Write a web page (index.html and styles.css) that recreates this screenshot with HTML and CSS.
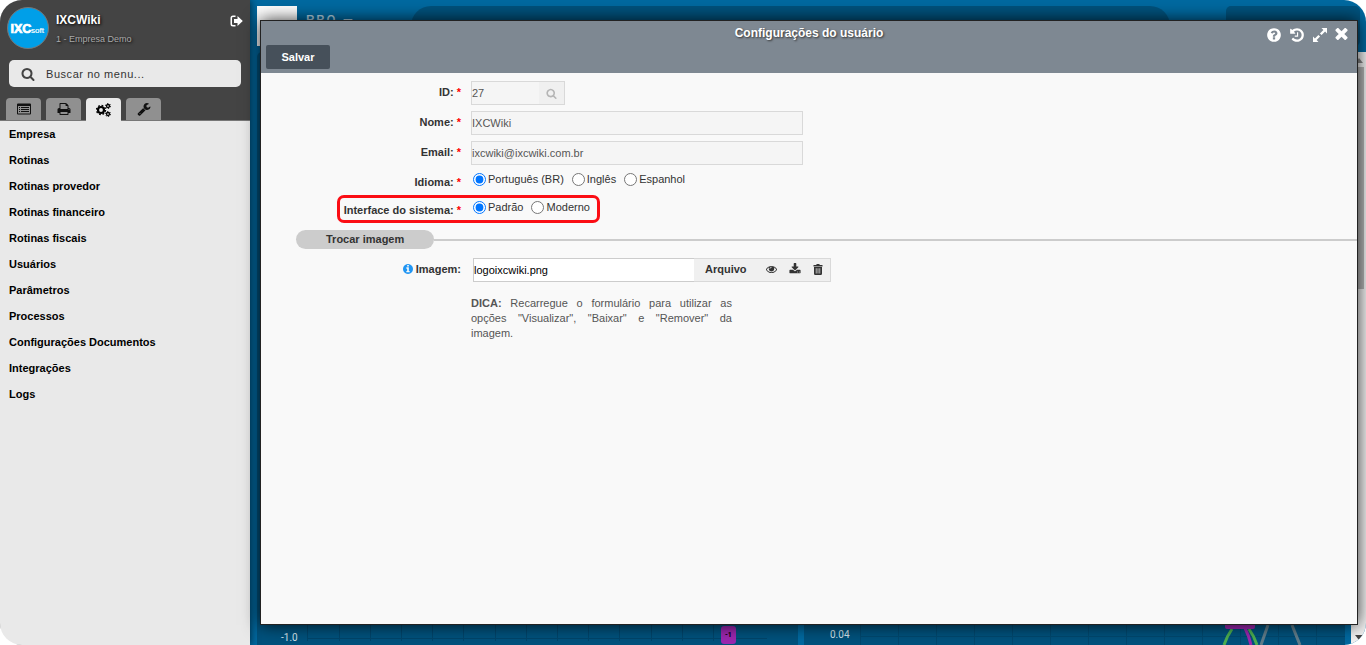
FILE: index.html
```html
<!DOCTYPE html>
<html lang="pt-BR">
<head>
<meta charset="utf-8">
<title>Configurações do usuário</title>
<link rel="stylesheet" href="styles.css">
</head>
<body>
<div class="app">
  <aside class="sidebar">
    <header class="side-head">
      <div class="profile">
        <svg class="logo" viewBox="0 0 42 42" role="img" aria-label="IXCsoft">
          <circle cx="21" cy="21" r="20.5" fill="#009fe8" stroke="#777" />
          <text x="3.5" y="25.5" font-size="12.5" font-weight="900" stroke="#fff" stroke-width=".7">IXC</text>
          <text x="24" y="25.5" font-size="8" stroke="#fff" stroke-width=".2">soft</text>
        </svg>
        <div class="who">
          <strong class="user">IXCWiki</strong>
          <span class="company">1 - Empresa Demo</span>
        </div>
        <button class="icon-btn logout" aria-label="Sair">
          <svg viewBox="0 0 13 12" width="13" height="12" fill="currentColor"><path d="M5.500 .5H3Q.5 .5 .5 3v6q0 2.500 2.500 2.500h2.500V10H3q-1 0-1-1V3q0-1 1-1h2.500zM7.500 1 12.800 6 7.500 11V8H4V4h3.500z"/></svg>
        </button>
      </div>
      <label class="search">
        <svg viewBox="0 0 1792 1792" width="14" height="14" fill="#444"><path d="M1216 832q0-185-131.500-316.500t-316.500-131.500-316.500 131.500-131.500 316.500 131.500 316.500 316.500 131.500 316.500-131.500 131.500-316.500zm512 832q0 52-38 90t-90 38q-54 0-90-38l-343-342q-179 124-399 124-143 0-273.500-55.500t-225-150-150-225-55.500-273.500 55.500-273.500 150-225 225-150 273.500-55.500 273.500 55.500 225 150 150 225 55.500 273.500q0 220-124 399l343 343q37 37 37 90z"/></svg>
        <input type="text" placeholder="Buscar no menu..." aria-label="Buscar no menu">
      </label>
      <nav class="tabs" aria-label="Módulos">
        <button class="tab" aria-label="Cadastros"><svg viewBox="0 0 14 12" width="14" height="12" fill="#111"><path fill-rule="evenodd" d="M1 .5h12q1 0 1 1v9q0 1-1 1H1q-1 0-1-1v-9q0-1 1-1zM1 3v7.500h12V3z"/><path d="M2 4h1v1H2zM4 4h8v1H4zM2 6h1v1H2zM4 6h8v1H4zM2 8h1v1H2zM4 8h8v1H4z"/></svg></button>
        <button class="tab" aria-label="Relatórios"><svg viewBox="0 0 1792 1792" width="14" height="14" fill="#111"><path d="M448 1536h896v-256h-896v256zm0-640h896v-384h-160q-40 0-68-28t-28-68v-160h-640v640zm1152 64q0-26-19-45t-45-19-45 19-19 45 19 45 45 19 45-19 19-45zm128 0v416q0 13-9.500 22.500t-22.500 9.500h-224v160q0 40-28 68t-68 28h-960q-40 0-68-28t-28-68v-160h-224q-13 0-22.500-9.500t-9.500-22.500v-416q0-79 56.500-135.500t135.500-56.500h64v-544q0-40 28-68t68-28h672q40 0 88 20t76 48l152 152q28 28 48 76t20 88v256h64q79 0 135.500 56.500t56.500 135.500z"/></svg></button>
        <button class="tab active" aria-label="Configurações"><svg viewBox="0 0 15 14" width="15" height="14" fill="none" stroke="#000"><circle cx="5" cy="7" r="3" stroke-width="2.2"/><circle cx="5" cy="7" r="4.500" stroke-width="1.400" stroke-dasharray="1.767"/><circle cx="12" cy="3" r="1.500" stroke-width="1.300"/><circle cx="12" cy="3" r="2.500" stroke-width="1" stroke-dasharray="1.310"/><circle cx="12" cy="11" r="1.500" stroke-width="1.300"/><circle cx="12" cy="11" r="2.500" stroke-width="1" stroke-dasharray="1.310"/></svg></button>
        <button class="tab" aria-label="Ferramentas"><svg viewBox="0 0 1792 1792" width="14" height="14" fill="#111"><path d="M448 1472q0-26-19-45t-45-19-45 19-19 45 19 45 45 19 45-19 19-45zm644-420l-682 682q-37 37-90 37-52 0-91-37l-106-108q-38-36-38-90 0-53 38-91l681-681q39 98 114.500 173.500t173.500 114.500zm634-435q0 39-23 106-47 134-164.500 217.500t-258.500 83.500q-185 0-316.500-131.500t-131.500-316.500 131.500-316.500 316.500-131.500q58 0 121.500 16.500t107.500 46.500q16 11 16 28t-16 28l-293 169v224l193 107q5-3 79-48.500t135.500-81 70.500-35.500q15 0 23.500 10t8.500 25z"/></svg></button>
      </nav>
    </header>
    <nav class="menu" aria-label="Menu">
      <a href="#">Empresa</a>
      <a href="#">Rotinas</a>
      <a href="#">Rotinas provedor</a>
      <a href="#">Rotinas financeiro</a>
      <a href="#">Rotinas fiscais</a>
      <a href="#">Usuários</a>
      <a href="#">Parâmetros</a>
      <a href="#">Processos</a>
      <a href="#">Configurações Documentos</a>
      <a href="#">Integrações</a>
      <a href="#">Logs</a>
    </nav>
  </aside>

  <main class="dashboard">
    <header class="topbar">
      <div class="brand"></div>
      <span class="brand-name">PRO —</span>
      <div class="top-search"></div>
      <div class="top-card"></div>
    </header>
    <div class="board">
      <div class="panels">
        <section class="panel">
          <svg width="541" height="24" viewBox="0 0 541 24">
            <path d="M50.500 0v20M82.500 0v20M113.500 0v20M144.500 0v20M175.500 0v20M206.500 0v20M238.500 0v20M269.500 0v20M300.500 0v20M331.500 0v20M362.500 0v20M394.500 0v20M425.500 0v20M456.500 0v20M50 17.500h460" stroke="#00456b" fill="none"/>
            <rect x="464" y="5" width="15" height="18" rx="3" fill="#9c27b0"/>
            <text x="24" y="20" class="axis">-1.0</text>
            <text x="468" y="16" class="point">-1</text>
          </svg>
        </section>
        <section class="panel">
          <svg width="541" height="24" viewBox="0 0 541 24">
            <path d="M56.500 0v24M94.500 0v24M132.500 0v24M170.500 0v24M208.500 0v24M246.500 0v24M284.500 0v24M322.500 0v24M360.500 0v24M398.500 0v24M436.500 0v24M474.500 0v24M512.500 0v24M56 15.500h485" stroke="#00486f" fill="none"/>
            <g fill="none" stroke-width="3">
              <path d="M420 24q3-9 8-16M453 24q-3-9-8-16" stroke="#4caf50"/>
              <path d="M447 24q-2-9-6-17" stroke="#9c27b0"/>
              <path d="M457 24 464 4M488 4l8 20" stroke="#607d8b"/>
            </g>
            <path d="M421 4h30v2q0 2-2 2h-26q-2 0-2-2z" fill="#9c27b0"/>
            <text x="26" y="17" class="axis">0.04</text>
          </svg>
        </section>
      </div>
      <div class="scrollbar">
        <svg width="8" height="5" viewBox="0 0 8 5" fill="#888"><path d="M4 0l4 5H0z"/></svg>
        <div class="thumb"></div>
        <svg width="8" height="5" viewBox="0 0 8 5" fill="#444"><path d="M0 0h8L4 5z"/></svg>
      </div>
    </div>
  </main>

  <section class="dialog" role="dialog" aria-labelledby="dlg-title">
    <header class="dlg-head">
      <div class="title-row">
        <h1 id="dlg-title">Configurações do usuário</h1>
        <div class="dlg-tools">
          <button class="icon-btn" aria-label="Ajuda"><svg viewBox="0 0 1792 1792" width="16" height="16" fill="#fff"><path d="M1024 1376v-192q0-14-9-23t-23-9h-192q-14 0-23 9t-9 23v192q0 14 9 23t23 9h192q14 0 23-9t9-23zm256-672q0-88-55.500-163t-138.500-116-170-41q-243 0-371 213-15 24 8 42l132 100q7 6 19 6 16 0 25-12 53-68 86-92 34-24 86-24 48 0 85.500 26t37.500 59q0 38-20 61t-68 45q-63 28-115.500 86.500t-52.500 125.500v36q0 14 9 23t23 9h192q14 0 23-9t9-23q0-19 21.500-49.500t54.500-49.500q32-18 49-28.500t46-35 44.500-48 28-60.500 12.500-81zm384 192q0 209-103 385.500t-279.500 279.500-385.500 103-385.500-103-279.500-279.500-103-385.500 103-385.500 279.500-279.500 385.500-103 385.500 103 279.500 279.500 103 385.500z"/></svg></button>
          <button class="icon-btn" aria-label="Histórico"><svg viewBox="0 0 1792 1792" width="16" height="16" fill="#fff"><path d="M1664 896q0 156-61 298t-164 245-245 164-298 61q-172 0-327-72.500t-264-204.500q-7-10-6.500-22.500t8.500-20.500l137-138q10-9 25-9 16 2 23 12 73 95 179 147t225 52q104 0 198.500-40.500t163.500-109.500 109.500-163.500 40.500-198.500-40.500-198.500-109.500-163.500-163.500-109.500-198.500-40.500q-98 0-188 35.500t-160 101.500l137 138q31 30 14 69-17 40-59 40h-448q-26 0-45-19t-19-45v-448q0-42 40-59 39-17 69 14l130 129q107-101 244.500-156.500t284.500-55.500q156 0 298 61t245 164 164 245 61 298zm-640-288v448q0 14-9 23t-23 9h-320q-14 0-23-9t-9-23v-64q0-14 9-23t23-9h224v-352q0-14 9-23t23-9h64q14 0 23 9t9 23z"/></svg></button>
          <button class="icon-btn" aria-label="Expandir"><svg viewBox="0 0 16 16" width="16" height="16" fill="#fff"><path d="M9.500 1H15v5.500l-1.900-1.900L9.600 8.100 7.900 6.400l3.500-3.500zM6.500 15H1V9.500l1.900 1.900 3.500-3.500 1.700 1.700-3.500 3.500z"/></svg></button>
          <button class="icon-btn" aria-label="Fechar"><svg viewBox="260 380 1270 1270" width="13" height="13" fill="#fff"><path d="M1490 1322q0 40-28 68l-136 136q-28 28-68 28t-68-28l-294-294-294 294q-28 28-68 28t-68-28l-136-136q-28-28-28-68t28-68l294-294-294-294q-28-28-28-68t28-68l136-136q28-28 68-28t68 28l294 294 294-294q28-28 68-28t68 28l136 136q28 28 28 68t-28 68l-294 294 294 294q28 28 28 68z"/></svg></button>
        </div>
      </div>
      <button class="save" type="submit" form="user-form">Salvar</button>
    </header>
    <form class="form" id="user-form">
      <div class="row">
        <label class="lbl" for="f-id">ID: <i>*</i></label>
        <div class="id-field">
          <input class="text" id="f-id" value="27" readonly>
          <button type="button" class="lookup" aria-label="Pesquisar"><svg viewBox="0 0 1792 1792" width="11" height="11" fill="#b5b5b5"><path d="M1216 832q0-185-131.500-316.500t-316.500-131.500-316.500 131.500-131.500 316.500 131.500 316.500 316.500 131.500 316.500-131.500 131.500-316.500zm512 832q0 52-38 90t-90 38q-54 0-90-38l-343-342q-179 124-399 124-143 0-273.500-55.500t-225-150-150-225-55.500-273.500 55.500-273.500 150-225 225-150 273.500-55.500 273.500 55.500 225 150 150 225 55.500 273.500q0 220-124 399l343 343q37 37 37 90z"/></svg></button>
        </div>
      </div>
      <div class="row">
        <label class="lbl" for="f-nome">Nome: <i>*</i></label>
        <input class="text wide" id="f-nome" value="IXCWiki" readonly>
      </div>
      <div class="row">
        <label class="lbl" for="f-email">Email: <i>*</i></label>
        <input class="text wide" id="f-email" value="ixcwiki@ixcwiki.com.br" readonly>
      </div>
      <div class="row choice" role="radiogroup" aria-labelledby="l-idioma">
        <span class="lbl" id="l-idioma">Idioma: <i>*</i></span>
        <div class="radios">
          <label><input type="radio" name="idioma" checked>Português (BR)</label>
          <label><input type="radio" name="idioma">Inglês</label>
          <label><input type="radio" name="idioma">Espanhol</label>
        </div>
      </div>
      <div class="row choice marked" role="radiogroup" aria-labelledby="l-interface">
        <span class="lbl" id="l-interface">Interface do sistema: <i>*</i></span>
        <div class="radios">
          <label><input type="radio" name="interface" checked>Padrão</label>
          <label><input type="radio" name="interface">Moderno</label>
        </div>
      </div>
      <div class="divider"><h2>Trocar imagem</h2></div>
      <div class="row image-row">
        <label class="lbl" for="f-img"><svg viewBox="128 128 1536 1536" width="10" height="10" fill="#2196f3"><path d="M1152 1376v-160q0-14-9-23t-23-9h-96v-512q0-14-9-23t-23-9h-320q-14 0-23 9t-9 23v160q0 14 9 23t23 9h96v320h-96q-14 0-23 9t-9 23v160q0 14 9 23t23 9h448q14 0 23-9t9-23zm-128-896v-160q0-14-9-23t-23-9h-192q-14 0-23 9t-9 23v160q0 14 9 23t23 9h192q14 0 23-9t9-23zm640 416q0 209-103 385.500t-279.500 279.500-385.500 103-385.500-103-279.500-279.500-103-385.500 103-385.500 279.500-279.500 385.500-103 385.500 103 279.500 279.500 103 385.500z"/></svg> Imagem:</label>
        <div class="file-field">
          <input class="file-name" id="f-img" value="logoixcwiki.png">
          <button type="button" class="file-btn">Arquivo</button>
          <button type="button" class="icon-btn" aria-label="Visualizar"><svg viewBox="0 64 1792 1792" width="11" height="11" fill="#333"><path d="M1664 960q-152-236-381-353 61 104 61 225 0 185-131.500 316.500t-316.500 131.500-316.500-131.500-131.500-316.500q0-121 61-225-229 117-381 353 133 205 333.500 326.500t434.500 121.500 434.500-121.500 333.500-326.500zm-720-384q0-20-14-34t-34-14q-125 0-214.500 89.500t-89.500 214.500q0 20 14 34t34 14 34-14 14-34q0-86 61-147t147-61q20 0 34-14t14-34zm848 384q0 34-20 69-140 230-376.500 368.500t-499.500 138.500-499.500-139-376.500-368q-20-35-20-69t20-69q140-229 376.500-368t499.500-139 499.500 139 376.500 368q20 35 20 69z"/></svg></button>
          <button type="button" class="icon-btn" aria-label="Baixar"><svg viewBox="0 0 1792 1792" width="12" height="12" fill="#333"><path d="M1344 1344q0-26-19-45t-45-19-45 19-19 45 19 45 45 19 45-19 19-45zm256 0q0-26-19-45t-45-19-45 19-19 45 19 45 45 19 45-19 19-45zm128-224v320q0 40-28 68t-68 28h-1472q-40 0-68-28t-28-68v-320q0-40 28-68t68-28h465l135 136q58 56 136 56t136-56l136-136h464q40 0 68 28t28 68zm-325-569q17 41-14 70l-448 448q-18 19-45 19t-45-19l-448-448q-31-29-14-70 17-39 59-39h256v-448q0-26 19-45t45-19h256q26 0 45 19t19 45v448h256q42 0 59 39z"/></svg></button>
          <button type="button" class="icon-btn" aria-label="Remover"><svg viewBox="0 0 10 11" width="10" height="11" fill="#333"><path fill-rule="evenodd" d="M3.200 1 3.700 0h2.600l.5 1H9.500v1.500H.5V1zM1 3h8v6.500Q9 11 7.800 11H2.200Q1 11 1 9.500zM2.800 4.200v5.300h.7V4.200zM4.650 4.200v5.300h.7V4.200zM6.500 4.200v5.300h.7V4.200z"/></svg></button>
        </div>
      </div>
      <p class="tip"><b>DICA:</b> Recarregue o formulário para utilizar as opções "Visualizar", "Baixar" e "Remover" da imagem.</p>
    </form>
  </section>
</div>
</body>
</html>
```

FILE: styles.css
```css
* { box-sizing: border-box; }
body {
  margin: 0;
  background: #fff;
  font: 11px/15px "Liberation Sans", Arial, sans-serif;
  color: #333;
}
button, input { font: inherit; color: inherit; }
button { padding: 0; border: 0; background: none; cursor: pointer; }
svg { display: block; }

.app {
  position: relative;
  display: flex;
  height: 100vh;
  border-radius: 22px;
  overflow: hidden;
}

/* Sidebar */
.sidebar {
  position: relative;
  z-index: 1;
  width: 250px;
  flex: none;
  background: #e9e9e9;
  box-shadow: 0 0 8px rgba(0, 0, 0, .7);
}
.side-head {
  background: #444;
  border-bottom: 1px solid #777;
}
.profile {
  display: flex;
  padding: 7px 7px 0;
  gap: 7px;
  color: #fff;
}
.logo {
  width: 42px;
  height: 42px;
  fill: #fff;
}
.who {
  flex: 1;
  display: flex;
  flex-direction: column;
  gap: 4px;
  padding-top: 6px;
  text-shadow: 1px 1px 3px #000;
}
.user { font-size: 12px; }
.company { font-size: 9px; line-height: 14px; color: #aaa; }
.logout { align-self: flex-start; padding-top: 8px; }
.search {
  display: flex;
  align-items: center;
  gap: 9px;
  height: 27px;
  margin: 11px 9px;
  padding: 1px 12px 0;
  border-radius: 5px;
  background: #e9e9e9;
}
.search input {
  flex: 1;
  min-width: 0;
  border: 0;
  background: none;
  outline: 0;
  letter-spacing: .05em;
}
.search input::placeholder { color: #333; opacity: 1; }
.tabs {
  display: flex;
  gap: 5px;
  padding: 0 6px;
}
.tab {
  display: flex;
  justify-content: center;
  align-items: center;
  width: 35px;
  height: 22px;
  border-radius: 4px 4px 0 0;
  background: #909090;
}
.tab.active { background: #e9e9e9; margin-bottom: -1px; height: 23px; }
.menu { display: flex; flex-direction: column; }
.menu a {
  padding: 0 9px;
  line-height: 26px;
  font-weight: bold;
  color: #000;
  text-decoration: none;
}

/* Dashboard behind the dialog */
.dashboard {
  flex: 1;
  display: flex;
  flex-direction: column;
  background: #0069a0;
}
.topbar {
  display: flex;
  align-items: flex-start;
  height: 52px;
  padding: 6px 6px 0 7px;
}
.brand { width: 40px; height: 40px; background: #fff; }
.brand-name {
  width: 105px;
  margin: 6px 0 0 9px;
  font: 500 13px/16px Roboto, sans-serif;
  letter-spacing: 2px;
  color: #b3d2e3;
}
.top-search {
  flex: 1;
  height: 40px;
  margin-right: 56px;
  border-radius: 20px;
  background: #00527d;
}
.top-card {
  width: 134px;
  height: 40px;
  border-radius: 5px;
  background: #00527d;
}
.board { flex: 1; display: flex; }
.panels {
  flex: 1;
  display: flex;
  gap: 6px;
  padding: 0 6px 0 7px;
}
.panel {
  flex: 1;
  min-width: 0;
  display: flex;
  align-items: flex-end;
  border-radius: 5px 5px 0 0;
  background: #00527d;
}
.axis { font: 10px Roboto, sans-serif; fill: #d5e4ec; }
.point { font: bold 7px Roboto, sans-serif; fill: #000; }
.scrollbar {
  display: flex;
  flex-direction: column;
  align-items: center;
  width: 15px;
  padding: 6px 0 5px;
  background: #f1f1f1;
}
.thumb {
  width: 11px;
  height: 222px;
  margin: 4px 0 auto;
  background: #b5b5b5;
}

/* Dialog */
.dialog {
  position: absolute;
  z-index: 2;
  inset: 20px 8px 20px 260px;
  display: flex;
  flex-direction: column;
  border: 1px solid #222;
  background: #f9f9f9;
  box-shadow: 0 0 16px rgba(0, 0, 0, .8);
}
.dlg-head {
  padding-bottom: 4px;
  background: #7e8892;
  color: #fff;
}
.title-row {
  display: grid;
  grid-template-columns: 1fr auto 1fr;
  height: 24px;
}
.title-row h1 {
  grid-column: 2;
  margin: 0;
  font-size: 12px;
  line-height: 24px;
  text-shadow: 1px 1px 2px #333;
}
.dlg-tools {
  display: flex;
  justify-content: flex-end;
  align-items: center;
  gap: 7px;
  padding: 3px 9px 0 0;
}
.save {
  width: 64px;
  height: 24px;
  margin-left: 5px;
  border-radius: 2px;
  background: #46505a;
  font-weight: bold;
}
.form { padding-top: 8px; }
.row {
  display: flex;
  gap: 10px;
  margin-bottom: 6px;
}
.lbl {
  flex: none;
  width: 200px;
  padding-top: 4px;
  text-align: right;
  font-weight: bold;
}
.lbl i { color: #f00; font-style: normal; }
.lbl svg { display: inline-block; vertical-align: -1px; }
.text {
  height: 24px;
  padding: 0;
  border: 1px solid #d9d9d9;
  background: #f5f5f5;
  color: #555;
  outline: 0;
}
.wide { width: 332px; }
.id-field { display: flex; }
.id-field .text { width: 68px; border-right: 0; }
.lookup {
  display: flex;
  align-items: center;
  justify-content: center;
  width: 26px;
  border: 1px solid #d9d9d9;
  border-left: 0;
  background: #f0f0f0;
}
.choice { height: 24px; }
.choice .lbl { padding-top: 4px; }
.radios {
  display: flex;
  gap: 8px;
  padding: 1px 0 0 2px;
}
.radios label {
  display: flex;
  align-items: center;
  gap: 2px;
  height: 15px;
}
.radios input {
  width: 13px;
  height: 13px;
  margin: 0;
}
.marked {
  width: fit-content;
  height: 28px;
  margin: -6px 0 7px 76px;
  padding: 1px 7px 0 0;
  border: 3px solid #fb0d14;
  border-radius: 7px;
}
.marked .lbl { width: 121px; padding-top: 4px; }
.divider {
  display: flex;
  align-items: center;
  margin: 0 0 9px 35px;
}
.divider::after {
  content: "";
  flex: 1;
  height: 2px;
  background: #ccc;
}
.divider h2 {
  margin: 0;
  padding: 0 30px;
  border-radius: 10px;
  background: #ccc;
  font-size: 11px;
  line-height: 19px;
}
.image-row { gap: 12px; margin-bottom: 14px; }
.file-field {
  display: flex;
  align-items: center;
  gap: 12px;
  height: 24px;
  padding-right: 7px;
  border: 1px solid #d9d9d9;
  background: #f0f0f0;
}
.file-name {
  width: 221px;
  height: 24px;
  margin: 0 -1px;
  padding: 0;
  border: 1px solid #ccc;
  border-right: 0;
  background: #fff;
  color: #000;
  outline: 0;
}
.file-btn { margin-right: 7px; padding-bottom: 2px; font-weight: bold; }
.file-field svg { margin-bottom: 2px; }
.tip {
  width: 261px;
  margin: 0 0 0 210px;
  color: #555;
  text-align: justify;
}
```
